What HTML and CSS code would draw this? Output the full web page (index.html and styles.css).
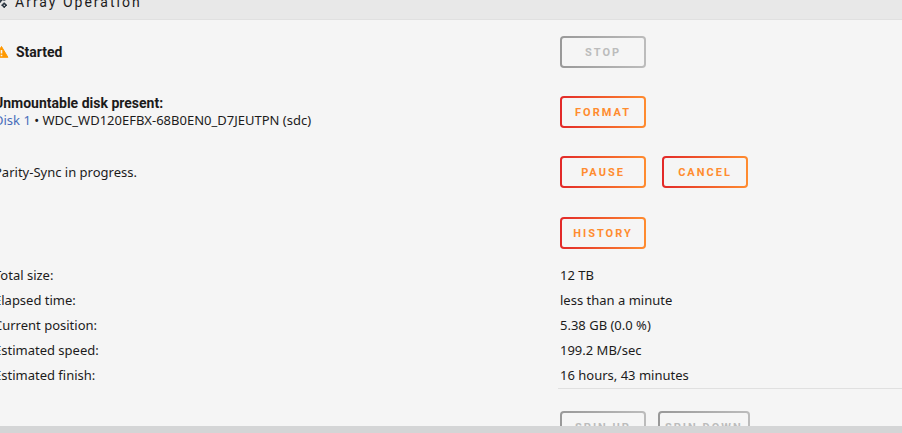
FILE: index.html
```html
<!DOCTYPE html>
<html lang="en">
<head>
<meta charset="utf-8">
<title>Array Operation</title>
<link rel="stylesheet" href="styles.css">
</head>
<body>
<header class="title">
  <svg class="gear" viewBox="0 0 14 14" aria-hidden="true"><circle cx="5" cy="5" r="2.5" fill="none" stroke="#28333f" stroke-width="1.6"/><path d="M5 1v2M5 7v2M1 5h2M7 5h2" stroke="#28333f" stroke-width="1.6"/><circle cx="11" cy="10.5" r="1.6" fill="none" stroke="#28333f" stroke-width="1.4"/><path d="M11 7.5v2M11 11.5v2M8 10.5h2M12 10.5h2" stroke="#28333f" stroke-width="1.4"/><circle cx="11" cy="3.5" r="1.4" fill="none" stroke="#28333f" stroke-width="1.4"/></svg>
  <h1>Array Operation</h1>
</header>
<main class="content">
  <section class="row">
    <div class="status">
      <svg class="warn" viewBox="0 0 14 12" aria-hidden="true"><path d="M7 .5 13.4 11.3H.6Z" fill="#ff9900" stroke="#ff9900" stroke-linejoin="round"/><path d="M7 4v3.5M7 8.8v1.4" stroke="#f5f5f5" stroke-width="1.6"/></svg>
      <strong>Started</strong>
    </div>
    <div class="actions"><button type="button" disabled>Stop</button></div>
  </section>
  <section class="row">
    <div><strong>Unmountable disk present:</strong><br><a href="#disk1">Disk 1</a> • WDC_WD120EFBX-68B0EN0_D7JEUTPN (sdc)</div>
    <div class="actions"><button type="button">Format</button></div>
  </section>
  <section class="row">
    <div>Parity-Sync in progress.</div>
    <div class="actions"><button type="button">Pause</button><button type="button">Cancel</button></div>
  </section>
  <section class="row history">
    <div></div>
    <div class="actions"><button type="button">History</button></div>
  </section>
  <dl class="details">
    <dt>Total size:</dt><dd>12 TB</dd>
    <dt>Elapsed time:</dt><dd>less than a minute</dd>
    <dt>Current position:</dt><dd>5.38 GB (0.0 %)</dd>
    <dt>Estimated speed:</dt><dd>199.2 MB/sec</dd>
    <dt>Estimated finish:</dt><dd>16 hours, 43 minutes</dd>
  </dl>
  <section class="row spin">
    <div></div>
    <div class="actions tight"><button type="button" disabled>Spin Up</button><button type="button" disabled>Spin Down</button></div>
  </section>
</main>
<footer class="statusbar"></footer>
</body>
</html>
```
FILE: styles.css
```css
* { box-sizing: border-box; }
body {
  margin: 0;
  height: 100vh;
  display: flex;
  flex-direction: column;
  overflow: hidden;
  background: #f5f5f5;
  color: #1c1b1b;
  font: 13px/17px "Noto Sans", sans-serif;
}
.title {
  flex: none;
  display: flex;
  align-items: center;
  gap: 8px;
  height: 36px;
  margin: -16px 0 0 -6px;
  background: #e8e8e8;
  border-bottom: 1px solid #e0e0e0;
}
.title h1 {
  margin: 0;
  font: 400 14px/18px Roboto, sans-serif;
  letter-spacing: 2px;
}
.gear { width: 13px; height: 14px; }
.content {
  flex: 1;
  min-height: 0;
  overflow: hidden;
  margin-left: -6px;
  padding-top: 2px;
}
.row, .details {
  display: grid;
  grid-template-columns: 1fr 342px;
  align-items: center;
}
.row { min-height: 60px; }
.history { margin-top: 1px; }
.status { display: flex; align-items: center; gap: 7px; }
.warn { width: 15px; height: 12px; }
strong { font-family: Roboto, sans-serif; }
.row strong { font-size: 14px; }
a { color: #486dba; text-decoration: none; }
.actions { display: flex; gap: 16px; }
.tight { gap: 12px; }
button {
  min-width: 86px;
  height: 32px;
  padding: 2px 5px 0;
  border: 2px solid transparent;
  border-radius: 4px;
  background: linear-gradient(#f5f5f5, #f5f5f5) padding-box,
    linear-gradient(90deg, #e22828, #ff8c2f) border-box;
  color: #ff8c2f;
  font: bold 11px/14px Roboto, sans-serif;
  letter-spacing: 2px;
  text-transform: uppercase;
  white-space: nowrap;
}
button:disabled {
  background: linear-gradient(#f5f5f5, #f5f5f5) padding-box,
    linear-gradient(90deg, #999999, #bcbcbc) border-box;
  color: #bcbcbc;
}
.details {
  margin: 0;
  grid-auto-rows: 25px;
}
.details dd { margin: 0; }
.spin { margin-top: 9px; position: relative; }
.spin::before {
  content: "";
  position: absolute;
  top: -9px;
  right: 0;
  width: 344px;
  border-top: 1px solid #e0e0e0;
}
.statusbar { flex: none; height: 7px; background: #d4d5d6; }
```
